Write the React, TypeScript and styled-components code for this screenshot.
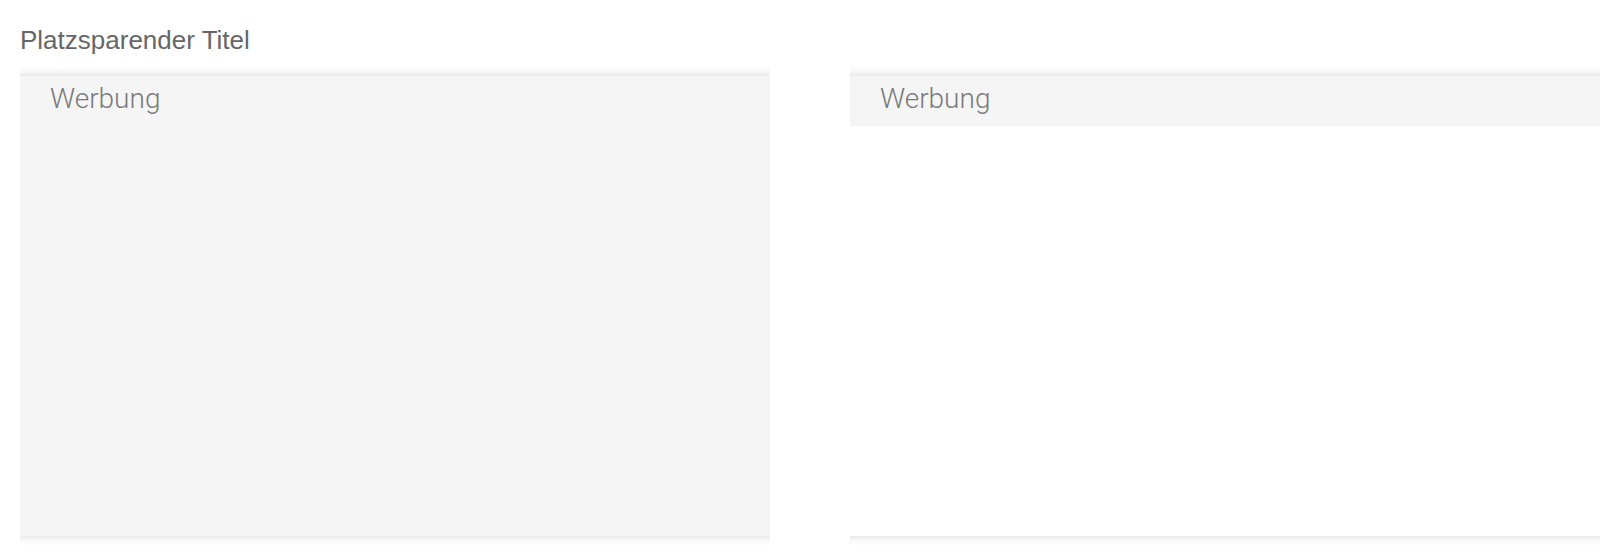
import React from "react";
import styled, { createGlobalStyle } from "styled-components";

const Global = createGlobalStyle`
  html, body { margin: 0; padding: 0; background: #fff; }
  body { font-family: "Liberation Sans", Arial, sans-serif; }
`;

const Page = styled.div`
  padding: 24px 20px 20px 20px;
`;

const Title = styled.h2`
  margin: 0;
  font-size: 26px;
  font-weight: 400;
  color: #666;
  line-height: 33px;
`;

const Columns = styled.div`
  margin-top: 19px;
  display: grid;
  grid-template-columns: 750px 750px;
  column-gap: 80px;
`;

const AdBox = styled.div<{ $filled: boolean }>`
  position: relative;
  height: 460px;
  background: ${(p) => (p.$filled ? "#f5f5f5" : "#fff")};
  display: flex;
  flex-direction: column;

  &::before,
  &::after {
    content: "";
    position: absolute;
    left: 0;
    right: 0;
    height: 10px;
    pointer-events: none;
  }
  &::before {
    top: -10px;
    background: linear-gradient(to top, rgba(0, 0, 0, 0.09), rgba(0, 0, 0, 0.03) 40%, rgba(0, 0, 0, 0));
  }
  &::after {
    bottom: -10px;
    background: linear-gradient(to bottom, rgba(0, 0, 0, 0.09), rgba(0, 0, 0, 0.03) 40%, rgba(0, 0, 0, 0));
  }
`;

const AdHeader = styled.div`
  height: 50px;
  background: #f5f5f5;
  padding: 3px 0 0 30px;
  box-sizing: border-box;
`;

const AdLabel = styled.span`
  display: block;
  font-family: Roboto, "Liberation Sans", sans-serif;
  font-size: 28px;
  line-height: 40px;
  color: #7a7a7a;
  font-weight: 300;
`;

export default function App() {
  return (
    <>
      <Global />
      <Page>
        <Title>Platzsparender Titel</Title>
        <Columns>
          <AdBox $filled>
            <AdHeader>
              <AdLabel>Werbung</AdLabel>
            </AdHeader>
          </AdBox>
          <AdBox $filled={false}>
            <AdHeader>
              <AdLabel>Werbung</AdLabel>
            </AdHeader>
          </AdBox>
        </Columns>
      </Page>
    </>
  );
}
